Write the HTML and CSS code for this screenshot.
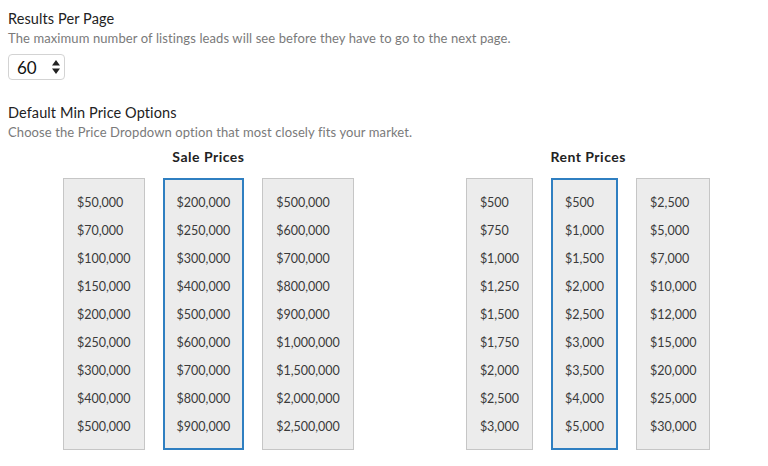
FILE: index.html
```html
<!DOCTYPE html>
<html>
<head>
  <title>Listing Settings</title>
  <link rel="stylesheet" href="styles.css">
</head>
<body>
  <div class="setting">
    <h2>Results Per Page</h2>
    <p class="hint">The maximum number of listings leads will see before they have to go to the next page.</p>
    <div class="select-box">
      <span>60</span>
      <svg width="8" height="14" viewBox="0 0 8 14"><path d="M4 0L8 5.5H0Z M4 14L8 8.5H0Z" fill="#222"/></svg>
    </div>
  </div>

  <div class="setting prices">
    <h2>Default Min Price Options</h2>
    <p class="hint">Choose the Price Dropdown option that most closely fits your market.</p>

    <div class="price-groups">
      <div class="price-group">
        <h3>Sale Prices</h3>
        <div class="columns">
          <ul class="option-list">
            <li>$50,000</li><li>$70,000</li><li>$100,000</li><li>$150,000</li><li>$200,000</li><li>$250,000</li><li>$300,000</li><li>$400,000</li><li>$500,000</li>
          </ul>
          <ul class="option-list selected">
            <li>$200,000</li><li>$250,000</li><li>$300,000</li><li>$400,000</li><li>$500,000</li><li>$600,000</li><li>$700,000</li><li>$800,000</li><li>$900,000</li>
          </ul>
          <ul class="option-list">
            <li>$500,000</li><li>$600,000</li><li>$700,000</li><li>$800,000</li><li>$900,000</li><li>$1,000,000</li><li>$1,500,000</li><li>$2,000,000</li><li>$2,500,000</li>
          </ul>
        </div>
      </div>

      <div class="price-group rent">
        <h3>Rent Prices</h3>
        <div class="columns">
          <ul class="option-list">
            <li>$500</li><li>$750</li><li>$1,000</li><li>$1,250</li><li>$1,500</li><li>$1,750</li><li>$2,000</li><li>$2,500</li><li>$3,000</li>
          </ul>
          <ul class="option-list selected">
            <li>$500</li><li>$1,000</li><li>$1,500</li><li>$2,000</li><li>$2,500</li><li>$3,000</li><li>$3,500</li><li>$4,000</li><li>$5,000</li>
          </ul>
          <ul class="option-list">
            <li>$2,500</li><li>$5,000</li><li>$7,000</li><li>$10,000</li><li>$12,000</li><li>$15,000</li><li>$20,000</li><li>$25,000</li><li>$30,000</li>
          </ul>
        </div>
      </div>
    </div>
  </div>
</body>
</html>
```

FILE: styles.css
```css
body {
  font-family: Lato, "Open Sans", sans-serif;
  margin: 0;
  padding: 10px 8px 0;
  background: #fff;
  color: #333;
}
h2 {
  font-size: 14.5px;
  font-weight: normal;
  letter-spacing: 0.1px;
  color: #222;
  margin: 0;
  line-height: 18px;
}
.hint {
  font-size: 13px;
  letter-spacing: 0.1px;
  color: #7a7a7a;
  margin: 1px 0 0;
  line-height: 18px;
}
.select-box {
  display: inline-flex;
  align-items: center;
  gap: 15px;
  margin-top: 7px;
  height: 24px;
  padding: 0 4px 0 8px;
  border: 1px solid #d3d3d3;
  border-radius: 4px;
  font-size: 17px;
  color: #111;
}
.prices {
  margin-top: 24px;
}
.price-groups {
  display: flex;
  gap: 112px;
  margin: 7px 0 0 55px;
}
h3 {
  font-size: 14px;
  font-weight: bold;
  letter-spacing: 0.5px;
  color: #222;
  text-align: center;
  margin: 0 0 12px;
  line-height: 18px;
}
.columns {
  display: flex;
  gap: 18px;
}
.option-list {
  list-style: none;
  margin: 0;
  padding: 10px 13px 8px;
  background: #ececec;
  border: 1px solid #c6c6c6;
  font-size: 12.5px;
  color: #3a3a3a;
}
.option-list li {
  line-height: 28px;
}
.option-list.selected {
  border: 2px solid #2f7fc1;
  padding: 9px 12px 7px;
}
```
